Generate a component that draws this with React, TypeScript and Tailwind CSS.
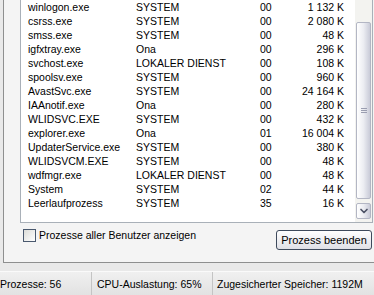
import { ChevronDown } from 'lucide-react';

const rows = [
  { name: 'winlogon.exe', user: 'SYSTEM', cpu: '00', mem: '1 132 K' },
  { name: 'csrss.exe', user: 'SYSTEM', cpu: '00', mem: '2 080 K' },
  { name: 'smss.exe', user: 'SYSTEM', cpu: '00', mem: '48 K' },
  { name: 'igfxtray.exe', user: 'Ona', cpu: '00', mem: '296 K' },
  { name: 'svchost.exe', user: 'LOKALER DIENST', cpu: '00', mem: '108 K' },
  { name: 'spoolsv.exe', user: 'SYSTEM', cpu: '00', mem: '960 K' },
  { name: 'AvastSvc.exe', user: 'SYSTEM', cpu: '00', mem: '24 164 K' },
  { name: 'IAAnotif.exe', user: 'Ona', cpu: '00', mem: '280 K' },
  { name: 'WLIDSVC.EXE', user: 'SYSTEM', cpu: '00', mem: '432 K' },
  { name: 'explorer.exe', user: 'Ona', cpu: '01', mem: '16 004 K' },
  { name: 'UpdaterService.exe', user: 'SYSTEM', cpu: '00', mem: '380 K' },
  { name: 'WLIDSVCM.EXE', user: 'SYSTEM', cpu: '00', mem: '48 K' },
  { name: 'wdfmgr.exe', user: 'LOKALER DIENST', cpu: '00', mem: '48 K' },
  { name: 'System', user: 'SYSTEM', cpu: '02', mem: '44 K' },
  { name: 'Leerlaufprozess', user: 'SYSTEM', cpu: '35', mem: '16 K' },
];

export default function App() {
  return (
    <div
      className="w-[374px] h-[295px] overflow-hidden bg-[#e9e9e9] text-[10.5px] text-black flex flex-col"
      style={{ fontFamily: '"Liberation Sans", Arial, sans-serif' }}
    >
      {/* tab page */}
      <div className="ml-[3px] w-[390px] h-[263px] shrink-0 border-l border-b border-[#8e8f8f] bg-[#f4f4f4] pl-[16px]">
        {/* list view */}
        <div className="w-[353px] h-[223px] flex border-l border-b border-r border-[#a9b0b8] bg-white">
          <div className="flex-1 pl-[7px]">
            {rows.map((r) => (
              <div key={r.name} className="flex h-[14px] leading-[14px] whitespace-nowrap">
                <span className="w-[108px]">{r.name}</span>
                <span className="w-[124px]">{r.user}</span>
                <span className="w-[24px]">{r.cpu}</span>
                <span className="w-[60px] text-right">{r.mem}</span>
              </div>
            ))}
          </div>
          {/* scrollbar */}
          <div className="w-[17px] flex flex-col bg-[#f3f3f0] px-px">
            <div className="h-[22px]" />
            <div className="h-[177px] rounded-[2px] border border-[#b3b6c4] bg-gradient-to-r from-[#ffffff] via-[#ecedf2] to-[#c9cbd8] flex items-center justify-center">
              <div className="flex flex-col gap-px">
                <div className="w-[6px] h-px bg-[#9a9db0]" />
                <div className="w-[6px] h-px bg-[#9a9db0]" />
                <div className="w-[6px] h-px bg-[#9a9db0]" />
              </div>
            </div>
            <div className="mt-[4px] h-[16px] rounded-[2px] border border-[#b3b6c4] bg-gradient-to-r from-[#ffffff] via-[#ecedf2] to-[#c9cbd8] flex items-center justify-center">
              <ChevronDown size={12} strokeWidth={3.4} color="#4d5366" />
            </div>
          </div>
        </div>
        {/* controls */}
        <div className="w-[353px] mt-[6px] flex justify-between items-start">
          <label className="flex items-center gap-[3px] ml-[3px]">
            <span className="w-[13px] h-[13px] border border-[#49586e] bg-gradient-to-br from-[#dcdcd8] to-white" />
            <span className="leading-[13px]">Prozesse aller Benutzer anzeigen</span>
          </label>
          <button className="mt-px w-[96px] h-[20px] rounded-[3px] border border-[#3e4a5c] bg-gradient-to-b from-white to-[#dfe0e6] leading-[18px] text-[11px] mr-px">
            Prozess beenden
          </button>
        </div>
      </div>
      {/* status bar */}
      <div className="flex-1 mt-[8px] flex items-stretch bg-gradient-to-b from-[#f0f0f0] to-[#e2e2e2] border-t border-[#fafafa] whitespace-nowrap">
        <div className="w-[92px] flex items-center pt-[2px] border-r border-[#c4c4c4]">Prozesse: 56</div>
        <div className="w-[121px] flex items-center pt-[2px] pl-[5px] border-r border-[#c4c4c4]">CPU-Auslastung: 65%</div>
        <div className="flex-1 flex items-center pt-[2px] pl-[4px]">Zugesicherter Speicher: 1192M</div>
      </div>
    </div>
  );
}
